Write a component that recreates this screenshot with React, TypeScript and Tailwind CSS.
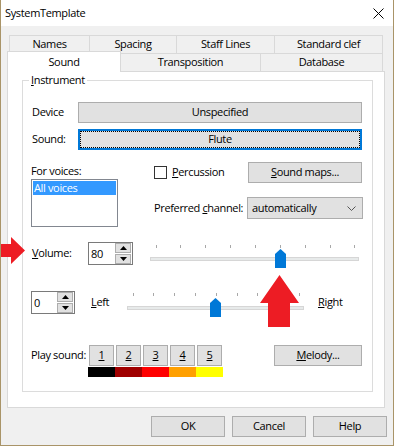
import type { ReactNode } from "react";

const Btn = ({
  w,
  children,
  className = "",
}: {
  w: string;
  children: ReactNode;
  className?: string;
}) => (
  <div
    className={`${w} h-[21px] shrink-0 flex items-center justify-center border border-[#adadad] bg-[#e1e1e1] ${className}`}
  >
    {children}
  </div>
);

const SpinBox = ({ w, value }: { w: string; value: string }) => (
  <div className={`${w} h-[23px] shrink-0 flex border border-[#7a7a7a] bg-white`}>
    <div className="flex-1 pl-[2px] leading-[21px]">{value}</div>
    <div className="w-[16px] mr-px flex flex-col gap-px">
      <div className="h-[10px] border border-[#adadad] bg-[#e1e1e1] flex items-center justify-center">
        <svg width="7" height="4" viewBox="0 0 7 4">
          <polygon points="3.5,0 7,4 0,4" fill="#000" />
        </svg>
      </div>
      <div className="h-[10px] border border-[#adadad] bg-[#e1e1e1] flex items-center justify-center">
        <svg width="7" height="4" viewBox="0 0 7 4">
          <polygon points="0,0 7,0 3.5,4" fill="#000" />
        </svg>
      </div>
    </div>
  </div>
);

// trackbar: ticks above, thumb pointing up
const Slider = ({
  width,
  ticks,
  value,
  tickTop,
}: {
  width: number;
  ticks: number[];
  value: number;
  tickTop: number;
}) => (
  <div className="relative h-[26px] shrink-0" style={{ width }}>
    {ticks.map((t) => (
      <div
        key={t}
        className="absolute w-px h-[3px] bg-[#a8a8a8]"
        style={{ left: Math.round(t), top: tickTop }}
      />
    ))}
    <div className="absolute left-0 right-0 top-[15px] h-[4px] border border-[#d6d6d6] bg-[#e7eaea]" />
    <svg
      className="absolute top-[7px]"
      style={{ left: Math.round(value - 5.5) }}
      width="11"
      height="19"
      viewBox="0 0 11 19"
    >
      <polygon points="0,5 5.5,0 11,5 11,19 0,19" fill="#0078d7" />
    </svg>
  </div>
);

const volTicks = [0, 16, 32, 48, 64, 80, 96, 112, 127].map((v) => 5.5 + (v * 198) / 127);
const panTicks = [0, 1, 2, 3, 4, 5, 6, 7, 8].map((i) => 5.5 + i * 20.8);

const tabBack = "h-[18px] shrink-0 flex items-center justify-center border-l border-t border-[#d9d9d9] bg-[#f0f0f0]";
const tabFront = "h-[18px] shrink-0 flex items-center justify-center border-r border-t border-[#d9d9d9] bg-[#f0f0f0]";

const colors = ["bg-black", "bg-[#a00000]", "bg-[#ff0000]", "bg-[#ffa000]", "bg-[#ffff00]"];

export default function App() {
  return (
    <div className="relative w-[394px] h-[446px] overflow-hidden whitespace-nowrap bg-[#f0f0f0] border-x border-b border-[#a99468] flex flex-col text-[11px] tracking-[-0.35px] text-black font-['Open_Sans',sans-serif]">
      {/* title bar */}
      <div className="h-[26px] shrink-0 bg-white flex items-center justify-between pl-[4px] pr-[9px]">
        <span>SystemTemplate</span>
        <svg width="11" height="11" viewBox="0 0 11 11">
          <path d="M0.5 0.5 L10.5 10.5 M10.5 0.5 L0.5 10.5" stroke="#000" strokeWidth="1" />
        </svg>
      </div>

      <div className="pl-[6px] pt-[9px]">
        {/* tabs */}
        <div className="flex ml-[2px]">
          <div className={`${tabBack} w-[80px]`}>Names</div>
          <div className={`${tabBack} w-[87px]`}>Spacing</div>
          <div className={`${tabBack} w-[98px]`}>Staff Lines</div>
          <div className={`${tabBack} w-[109px] border-r`}>Standard clef</div>
        </div>
        <div className="flex items-end h-[18px]">
          <div className="relative z-10 -mb-px w-[114px] h-[21px] shrink-0 flex items-center justify-center border-l border-t border-r border-[#d9d9d9] bg-white">
            Sound
          </div>
          <div className={`${tabFront} w-[140px]`}>Transposition</div>
          <div className={`${tabFront} w-[122px]`}>Database</div>
        </div>

        {/* tab page */}
        <div className="w-[378px] h-[337px] border border-[#d9d9d9] bg-white pl-[14px] pt-[8px]">
          <div className="relative w-[351px] h-[312px] border border-[#dcdcdc] pl-[8px] pt-[21px]">
            <div className="absolute left-[6px] top-[-9px] px-[2px] bg-white leading-[16px]">
              <span className="underline">I</span>nstrument
            </div>

            <div className="flex items-center h-[21px]">
              <div className="w-[47px] pl-px">Device</div>
              <Btn w="w-[284px]">Unspecified</Btn>
            </div>

            <div className="flex items-center h-[21px] mt-[6px]">
              <div className="w-[47px] pl-px">Sound:</div>
              <div className="relative w-[284px] h-[21px] border-2 border-[#0078d7] bg-[#e1e1e1] flex items-center justify-center">
                <div className="absolute inset-0 border border-dotted border-black" />
                Flute
              </div>
            </div>

            <div className="flex mt-[12px]">
              <div className="w-[87px] shrink-0">
                <div className="h-[17px] leading-[17px]">For voices:</div>
                <div className="h-[48px] border border-[#828790] p-px">
                  <div className="h-[14px] leading-[14px] bg-[#3399ff] text-white pl-px">All voices</div>
                </div>
              </div>

              <div className="ml-[36px] w-[209px] shrink-0 flex flex-col">
                <div className="flex items-center h-[21px]">
                  <div className="w-[13px] h-[13px] border border-[#333] bg-white" />
                  <div className="ml-[5px]">
                    <span className="underline">P</span>ercussion
                  </div>
                  <Btn w="w-[114px]" className="ml-auto mr-px">
                    <span>
                      <span className="underline">S</span>ound maps...
                    </span>
                  </Btn>
                </div>
                <div className="flex items-center h-[22px] mt-[14px]">
                  <div>
                    Preferred <span className="underline">c</span>hannel:
                  </div>
                  <div className="ml-auto w-[116px] h-[22px] shrink-0 border border-[#adadad] bg-[#e1e1e1] flex items-center pl-[4px] pr-[6px]">
                    <span className="flex-1">automatically</span>
                    <svg width="9" height="5" viewBox="0 0 9 5">
                      <polyline points="0.5,0.5 4.5,4.5 8.5,0.5" fill="none" stroke="#555" strokeWidth="1" />
                    </svg>
                  </div>
                </div>
              </div>
            </div>

            <div className="flex items-start mt-[15px]">
              <div className="w-[57px] h-[23px] shrink-0 flex items-center pl-px">
                <span>
                  <span className="underline">V</span>olume:
                </span>
              </div>
              <SpinBox w="w-[45px]" value="80" />
              <div className="ml-[17px]">
                <Slider width={209} ticks={volTicks} value={5.5 + (80 * 198) / 127} tickTop={3} />
              </div>
            </div>

            <div className="flex items-start mt-[23px]">
              <SpinBox w="w-[44px]" value="0" />
              <div className="ml-[16px] w-[36px] h-[23px] shrink-0 flex items-center">
                <span>
                  <span className="underline">L</span>eft
                </span>
              </div>
              <Slider width={177} ticks={panTicks} value={5.5 + 4 * 20.8} tickTop={2} />
              <div className="ml-[14px] h-[23px] flex items-center">
                <span>
                  <span className="underline">R</span>ight
                </span>
              </div>
            </div>

            <div className="flex items-start mt-[28px]">
              <div className="w-[58px] h-[21px] shrink-0 flex items-center">Play sound:</div>
              <div className="flex flex-col">
                <div className="flex gap-[2px]">
                  {["1", "2", "3", "4", "5"].map((n) => (
                    <Btn key={n} w="w-[25px]">
                      <span className="underline">{n}</span>
                    </Btn>
                  ))}
                </div>
                <div className="flex mt-px -ml-px">
                  {colors.map((c) => (
                    <div key={c} className={`${c} w-[27px] h-[10px]`} />
                  ))}
                </div>
              </div>
              <Btn w="w-[88px]" className="ml-[51px]">
                <span>
                  <span className="underline">M</span>elody...
                </span>
              </Btn>
            </div>
          </div>
        </div>
      </div>

      {/* dialog buttons */}
      <div className="flex justify-end gap-[7px] pr-[6px] mt-[8px]">
        <Btn w="w-[74px]">OK</Btn>
        <Btn w="w-[74px]">Cancel</Btn>
        <Btn w="w-[74px]">Help</Btn>
      </div>

      {/* red annotation arrows */}
      <svg className="absolute left-[-1px] top-[237px]" width="26" height="28" viewBox="0 0 26 28">
        <polygon points="0,7 11,7 11,0 25,13.5 11,27 11,20 0,20" fill="#ed1c24" />
      </svg>
      <svg className="absolute left-[258px] top-[274px]" width="41" height="54" viewBox="0 0 41 54">
        <polygon points="20.5,1 40,29 31,29 31,53 9,53 9,29 1,29" fill="#ed1c24" />
      </svg>
    </div>
  );
}
